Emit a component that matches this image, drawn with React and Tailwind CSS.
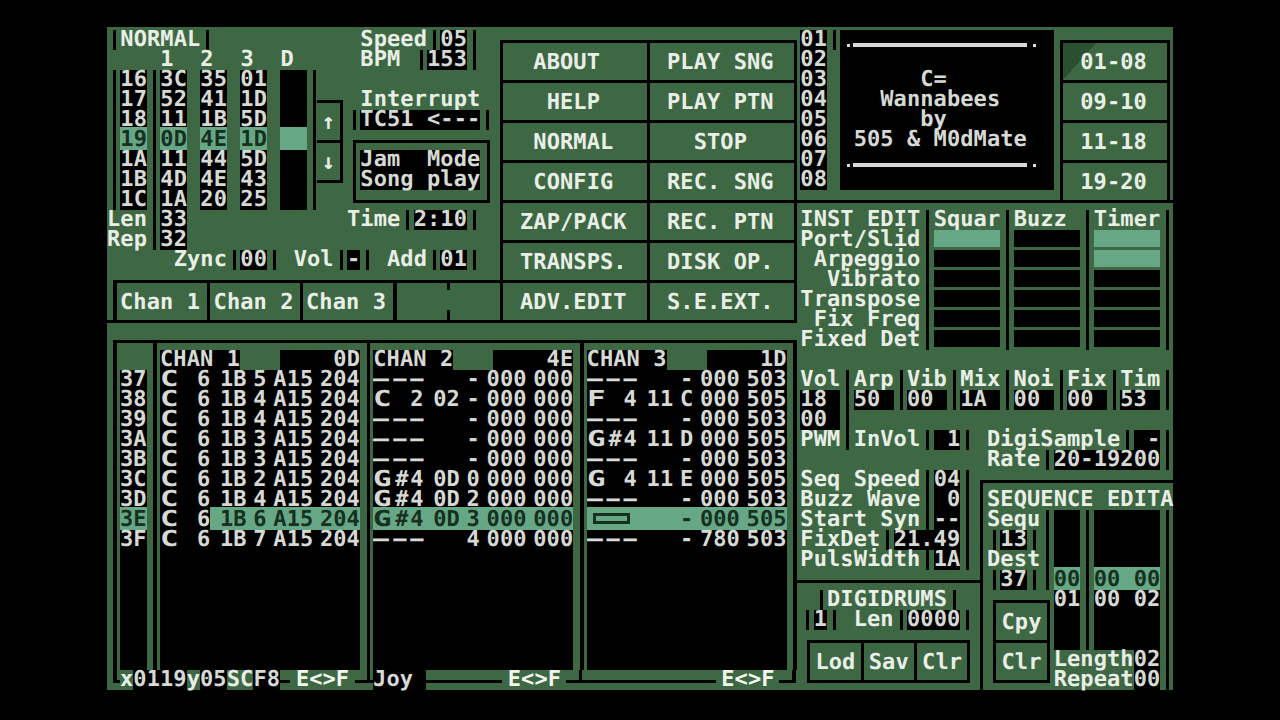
import React from 'react';

const sp = (n) => ' '.repeat(n);

// one character row of the 80x33 text screen
const Row = ({ children }) => <div className="h-5">{children}</div>;

// vertical rule, one character cell wide
const Bar = () => <span className="inline-block h-5 w-[3px] ml-[6px] mr-[4.33px] align-top bg-black" />;

const K = ({ children }) => (
  <span className="inline-block h-5 align-top bg-black text-[#d6d9d4]">{children}</span>
);

const Hi = ({ children }) => (
  <span className="inline-block h-5 align-top bg-[#66a886] text-[#17301f] shadow-[0_-3px_0_#66a886]">{children}</span>
);

const Btn = ({ children, className = '' }) => (
  <div className={`h-[37px] bg-[#3e6744] pt-[10px] pl-[17px] ${className}`}>{children}</div>
);

const Small = ({ children }) => (
  <div className="h-[37px] bg-[#3e6744] pt-[10px] text-center">{children}</div>
);

const seqRows = [
  ['16', '3C', '35', '01'],
  ['17', '52', '41', '1D'],
  ['18', '11', '1B', '5D'],
  ['19', '0D', '4E', '1D'],
  ['1A', '11', '44', '5D'],
  ['1B', '4D', '4E', '43'],
  ['1C', '1A', '20', '25'],
];

const menu = [
  [' ABOUT', 'PLAY SNG'],
  ['  HELP', 'PLAY PTN'],
  [' NORMAL', '  STOP'],
  [' CONFIG', 'REC. SNG'],
  ['ZAP/PACK', 'REC. PTN'],
  ['TRANSPS.', 'DISK OP.'],
  ['ADV.EDIT', 'S.E.EXT.'],
];

const instRows = [
  ['Port/Slid', true, false, true],
  [' Arpeggio', false, false, true],
  ['  Vibrato', false, false, false],
  ['Transpose', false, false, false],
  [' Fix Freq', false, false, false],
  ['Fixed Det', false, false, false],
];

const Toggle = ({ on }) => (
  <span className={`inline-block h-[17px] w-[66.67px] align-top ${on ? 'bg-[#66a886]' : 'bg-black'}`} />
);

const rowNums = ['37', '38', '39', '3A', '3B', '3C', '3D', '3E', '3F'];

const chan1 = [
  ['C', '6', '1B', '5', 'A15', '204'],
  ['C', '6', '1B', '4', 'A15', '204'],
  ['C', '6', '1B', '4', 'A15', '204'],
  ['C', '6', '1B', '3', 'A15', '204'],
  ['C', '6', '1B', '3', 'A15', '204'],
  ['C', '6', '1B', '2', 'A15', '204'],
  ['C', '6', '1B', '4', 'A15', '204'],
  ['C', '6', '1B', '6', 'A15', '204'],
  ['C', '6', '1B', '7', 'A15', '204'],
];

const chan2 = [
  ['---', '', '', '-', '000', '000'],
  ['C', '2', '02', '-', '000', '000'],
  ['---', '', '', '-', '000', '000'],
  ['---', '', '', '-', '000', '000'],
  ['---', '', '', '-', '000', '000'],
  ['G#', '4', '0D', '0', '000', '000'],
  ['G#', '4', '0D', '2', '000', '000'],
  ['G#', '4', '0D', '3', '000', '000'],
  ['---', '', '', '4', '000', '000'],
];

const chan3 = [
  ['---', '', '', '-', '000', '503'],
  ['F', '4', '11', 'C', '000', '505'],
  ['---', '', '', '-', '000', '503'],
  ['G#', '4', '11', 'D', '000', '505'],
  ['---', '', '', '-', '000', '503'],
  ['G', '4', '11', 'E', '000', '505'],
  ['---', '', '', '-', '000', '503'],
  ['cursor', '', '', '-', '000', '505'],
  ['---', '', '', '-', '780', '503'],
];

const Note = ({ note, octave }) => {
  if (note === '---') {
    return (
      <div className="flex gap-[4px]">
        <span className="w-4 origin-left scale-x-[1.2]">–</span>
        <span className="w-[13px]">–</span>
        <span className="w-[13px]">–</span>
      </div>
    );
  }
  if (note === 'cursor') {
    return <div className="ml-[6px] mt-[3px] h-[11px] w-[37px] border-[3px] border-[#17301f]" />;
  }
  return (
    <div className="grid grid-cols-[22px_15px_13px]">
      <span className="inline-block origin-left scale-x-[1.4]">{note[0]}</span>
      <span>{note[1] || ''}</span>
      <span>{octave}</span>
    </div>
  );
};

const Channel = ({ name, code, rows, hiNote }) => (
  <div className="w-[200px] pt-[7px]">
    <div className="flex h-5">
      <K>{name}</K>
      <div className="w-10" />
      <div className="flex-1 bg-black text-right text-[#d6d9d4]">{code}</div>
    </div>
    <div className="h-[300px] bg-black text-[#d6d9d4]">
      {rows.map((r, i) => {
        const hi = i === 7;
        const cell = hi ? 'bg-[#66a886] text-[#17301f] shadow-[0_-3px_0_#66a886]' : '';
        return (
          <div key={i} className="grid h-5 grid-cols-[50px_10px_33.33px_20px_46.67px_40px]">
            <div className={hi && hiNote ? cell : ''}>
              <Note note={r[0]} octave={r[1]} />
            </div>
            <div className={cell} />
            <div className={cell}>{r[2]}</div>
            <div className={cell}>{r[3]}</div>
            <div className={cell}>{r[4]}</div>
            <div className={cell}>{r[5]}</div>
          </div>
        );
      })}
    </div>
  </div>
);

const ChanDivider = () => <div className="ml-[6.67px] mr-[3px] w-[3.66px] bg-black" />;

// part of the box's bottom line in the footer strip
const Line = ({ className = '' }) => <div className={`h-[13px] border-b-[3px] border-black ${className}`} />;

const Tag = ({ className }) => <div className={`h-5 bg-[#3e6744] text-center text-[#f2f6ef] ${className}`}>{'E<>F'}</div>;

const TopLeft = () => (
  <div className="h-[293px] border-b-[3px] border-black">
    <div className="flex">
      {/* sequence list */}
      <div className="w-[210px]">
        <Row><Bar />NORMAL<Bar /></Row>
        <Row>{sp(4)}1{sp(2)}2{sp(2)}3{sp(2)}D</Row>
        {seqRows.map((r, i) => {
          const C = i === 3 ? Hi : K;
          return (
            <Row key={r[0]}>
              <Bar /><C>{r[0]}</C><Bar /><C>{r[1]}</C>{' '}<C>{r[2]}</C>{' '}<C>{r[3]}</C>{' '}<C>{'  '}</C><Bar />
            </Row>
          );
        })}
        <Row>Len<Bar /><K>33</K></Row>
        <Row>Rep<Bar /><K>32</K></Row>
      </div>

      {/* step arrows */}
      <div className="mt-[70px] flex h-[83px] w-[26px] flex-col gap-[3px] bg-black py-[3px] pr-[3px] text-center">
        <div className="h-[37px] bg-[#3e6744] leading-[40px]">↑</div>
        <div className="h-[37px] bg-[#3e6744] leading-[40px]">↓</div>
      </div>

      {/* speed, interrupt, mode */}
      <div className="ml-[4px] w-[153px]">
        <Row>{sp(1)}Speed<Bar /><K>05</K><Bar /></Row>
        <Row>{sp(1)}BPM{sp(1)}<Bar /><K>153</K><Bar /></Row>
        <Row />
        <Row>{sp(1)}Interrupt</Row>
        <Row><Bar /><K>TC51 {'<---'}</K><Bar /></Row>
        <div className="ml-[6px] mt-[10px] h-[63px] w-[137px] border-[3px] border-black pl-[4.3px] pt-[7px]">
          <Row><K>Jam  Mode</K></Row>
          <Row><K>Song play</K></Row>
        </div>
        <div className="mt-[7px]">
          <Row>Time<Bar /><K>2:10</K><Bar /></Row>
        </div>
      </div>
    </div>

    <Row>{sp(5)}Zync<Bar /><K>00</K><Bar />{sp(1)}Vol<Bar /><K>-</K><Bar />{sp(1)}Add<Bar /><K>01</K><Bar /></Row>

    {/* channel tabs */}
    <div className="ml-[6px] mt-[10px] flex h-10 gap-[3px] bg-black pl-[4px] pt-[3px]">
      <div className="h-[37px] w-[90px] bg-[#3e6744] pl-[3px] pt-[10px]">Chan 1</div>
      <div className="h-[37px] w-[90px] bg-[#3e6744] pl-[3.6px] pt-[10px]">Chan 2</div>
      <div className="h-[37px] w-[90px] bg-[#3e6744] pl-[3px] pt-[10px]">Chan 3</div>
      <div className="ml-[1px] flex h-[37px] flex-1 flex-col justify-between bg-[#3e6744]">
        <div className="ml-[50px] h-[7px] w-[3px] bg-black" />
        <div className="ml-[50px] h-[10px] w-[3px] bg-black" />
      </div>
    </div>
  </div>
);

const Menu = () => (
  <div className="mt-[10px] grid h-[283px] w-[297px] grid-cols-2 gap-[3px] bg-black p-[3px]">
    {menu.flat().map((label) => (
      <Btn key={label}>{label}</Btn>
    ))}
  </div>
);

const Pattern = () => (
  <div className="pl-[6px] pt-[17px]">
    <div className="flex h-[330px] w-[684px] border-x-[4px] border-t-[3px] border-black">
      <div className="ml-[3px] w-[26.67px] pt-[27px]">
        <div className="h-[300px] bg-black">
          {rowNums.map((n) => (
            <Row key={n}>{n === '3E' ? <Hi>{n}</Hi> : <K>{n}</K>}</Row>
          ))}
        </div>
      </div>
      <ChanDivider />
      <Channel name="CHAN 1" code="0D" rows={chan1} />
      <ChanDivider />
      <Channel name="CHAN 2" code="4E" rows={chan2} hiNote />
      <ChanDivider />
      <Channel name="CHAN 3" code="1D" rows={chan3} hiNote />
    </div>

    {/* footer strip over the box's bottom edge */}
    <div className="flex h-5">
      <div className="h-[13px] w-[7px] border-b-[3px] border-l-[4px] border-black" />
      <span>x</span><K>0119</K><span>y</span><K>05</K><span>SC</span><K>F8</K>
      <Line className="w-[10px]" />
      <Tag className="w-[65px]" />
      <Line className="w-[12px]" />
      <Line className="w-[6px] border-l-[3px]" />
      <K>Joy </K>
      <Line className="w-[76px]" />
      <Tag className="w-[64px]" />
      <Line className="w-[13px]" />
      <Line className="w-[137px] border-l-[3px]" />
      <Tag className="w-[63px]" />
      <div className="h-[13px] w-[17px] border-b-[3px] border-r-[4px] border-black" />
    </div>
  </div>
);

const Rule = () => (
  <div className="flex h-5 items-end pb-[3px] pl-[7px]">
    <div className="mb-[0.5px] h-[3px] w-[3px] bg-[#d6d9d4]" />
    <div className="ml-[3px] h-1 w-[174px] bg-[#d6d9d4]" />
    <div className="ml-[6px] mb-[0.5px] h-[3px] w-[3px] bg-[#d6d9d4]" />
  </div>
);

const Credits = () => (
  <div className="flex h-[173px] border-b-[3px] border-black pl-[3.3px]">
    <div className="w-[26.67px]">
      {['01', '02', '03', '04', '05', '06', '07', '08'].map((n) => (
        <Row key={n}><K>{n}</K></Row>
      ))}
    </div>
    <Bar />
    <div className="h-40 w-[213.3px] bg-black text-[#d6d9d4]">
      <Rule />
      <Row />
      <Row>{sp(6)}C=</Row>
      <Row>{sp(3)}Wannabees</Row>
      <Row>{sp(6)}by</Row>
      <Row>{sp(1)}505 &amp; M0dMate</Row>
      <Rule />
    </div>
    {/* song range buttons */}
    <div className="ml-[6.7px] mt-[10px] grid h-40 w-[110px] gap-[3px] bg-black px-[3px] pt-[3px]">
      <Btn className="bg-[linear-gradient(131.7deg,#2b4f31_24.6px,#3e6744_24.6px)]">01-08</Btn>
      <Btn>09-10</Btn>
      <Btn>11-18</Btn>
      <Btn>19-20</Btn>
    </div>
  </div>
);

const InstEdit = () => (
  <div className="pl-[3.3px] pt-[7px]">
    <Row>INST EDIT<Bar />Squar<Bar />Buzz{sp(1)}<Bar />Timer<Bar /></Row>
    {instRows.map(([label, a, b, c]) => (
      <Row key={label}>
        {label}<Bar /><Toggle on={a} /><Bar /><Toggle on={b} /><Bar /><Toggle on={c} /><Bar />
      </Row>
    ))}
    <Row />
    <Row>Vol<Bar />Arp<Bar />Vib<Bar />Mix<Bar />Noi<Bar />Fix<Bar />Tim<Bar /></Row>
    <Row>
      <K>18 </K><Bar /><K>50 </K><Bar /><K>00 </K><Bar /><K>1A </K><Bar /><K>00 </K><Bar /><K>00 </K><Bar /><K>53 </K><Bar />
    </Row>
    <Row><K>00 </K><Bar /></Row>
    <Row>PWM<Bar />InVol<Bar /><K> 1</K><Bar />{sp(1)}DigiSample<Bar /><K> -</K><Bar /></Row>
    <Row>{sp(14)}Rate<Bar /><K>20-19200</K><Bar /></Row>
  </div>
);

const Params = () => (
  <div className="w-[183px]">
    <div className="h-[113px] border-b-[3px] border-black pl-[3.3px]">
      <Row>Seq Speed<Bar /><K>04</K><Bar /></Row>
      <Row>Buzz Wave<Bar /><K> 0</K><Bar /></Row>
      <Row>Start Syn<Bar /><K>--</K><Bar /></Row>
      <Row>FixDet<Bar /><K>21.49</K><Bar /></Row>
      <Row>PulsWidth<Bar /><K>1A</K><Bar /></Row>
    </div>
    <div className="pl-[3.3px] pt-[7px]">
      <Row>{sp(1)}<Bar />DIGIDRUMS<Bar /></Row>
      <Row><Bar /><K>1</K><Bar />{sp(1)}Len<Bar /><K>0000</K><Bar /></Row>
      <div className="ml-[7px] mt-[10px] grid h-[43px] w-[163px] grid-cols-3 gap-[3px] bg-black p-[3px]">
        <Small>Lod</Small>
        <Small>Sav</Small>
        <Small>Clr</Small>
      </div>
    </div>
  </div>
);

const SeqEditor = () => (
  <div className="mt-[10px] h-[210px] w-[193px] border-l-[3px] border-t-[3px] border-black pl-[4px] pt-[7px]">
    <Row>SEQUENCE EDITA</Row>
    <div className="flex">
      <div className="w-[66.67px]">
        <Row>Sequ<Bar /></Row>
        <Row><Bar /><K>13</K><Bar /><Bar /></Row>
        <Row>Dest<Bar /></Row>
        <Row><Bar /><K>37</K><Bar /><Bar /></Row>
        <div className="ml-[6px] mt-[10px] flex h-[83px] w-[57px] flex-col gap-[3px] bg-black p-[3px]">
          <Small>Cpy</Small>
          <Small>Clr</Small>
        </div>
      </div>
      <div>
        <Row><K>{'  '}</K><Bar /><K>{sp(5)}</K><Bar /></Row>
        <Row><K>{'  '}</K><Bar /><K>{sp(5)}</K><Bar /></Row>
        <Row><K>{'  '}</K><Bar /><K>{sp(5)}</K><Bar /></Row>
        <Row><Hi>00</Hi><Bar /><Hi>00 00</Hi><Bar /></Row>
        <Row><K>01</K><Bar /><K>00 02</K><Bar /></Row>
        <Row><K>{'  '}</K><Bar /><K>{sp(5)}</K><Bar /></Row>
        <Row><K>{'  '}</K><Bar /><K>{sp(5)}</K><Bar /></Row>
        <Row>Length<K>02</K><Bar /></Row>
        <Row>Repeat<K>00</K><Bar /></Row>
      </div>
    </div>
  </div>
);

export default function App() {
  return (
    <div className="h-screen bg-black pt-[27px]">
      <div className="mx-auto flex h-[663px] w-[1066px] bg-[#3e6744] pt-[3px] font-['DejaVu_Sans_Mono',monospace] text-[22px] font-bold leading-5 tracking-[0.088px] whitespace-pre text-[#e9efe6] [text-rendering:geometricPrecision]">
        <div className="w-[690px]">
          <div className="flex">
            <div className="w-[393px]">
              <TopLeft />
            </div>
            <Menu />
          </div>
          <Pattern />
        </div>

        <div className="w-[376px]">
          <Credits />
          <InstEdit />
          <div className="flex">
            <Params />
            <SeqEditor />
          </div>
        </div>
      </div>
    </div>
  );
}
